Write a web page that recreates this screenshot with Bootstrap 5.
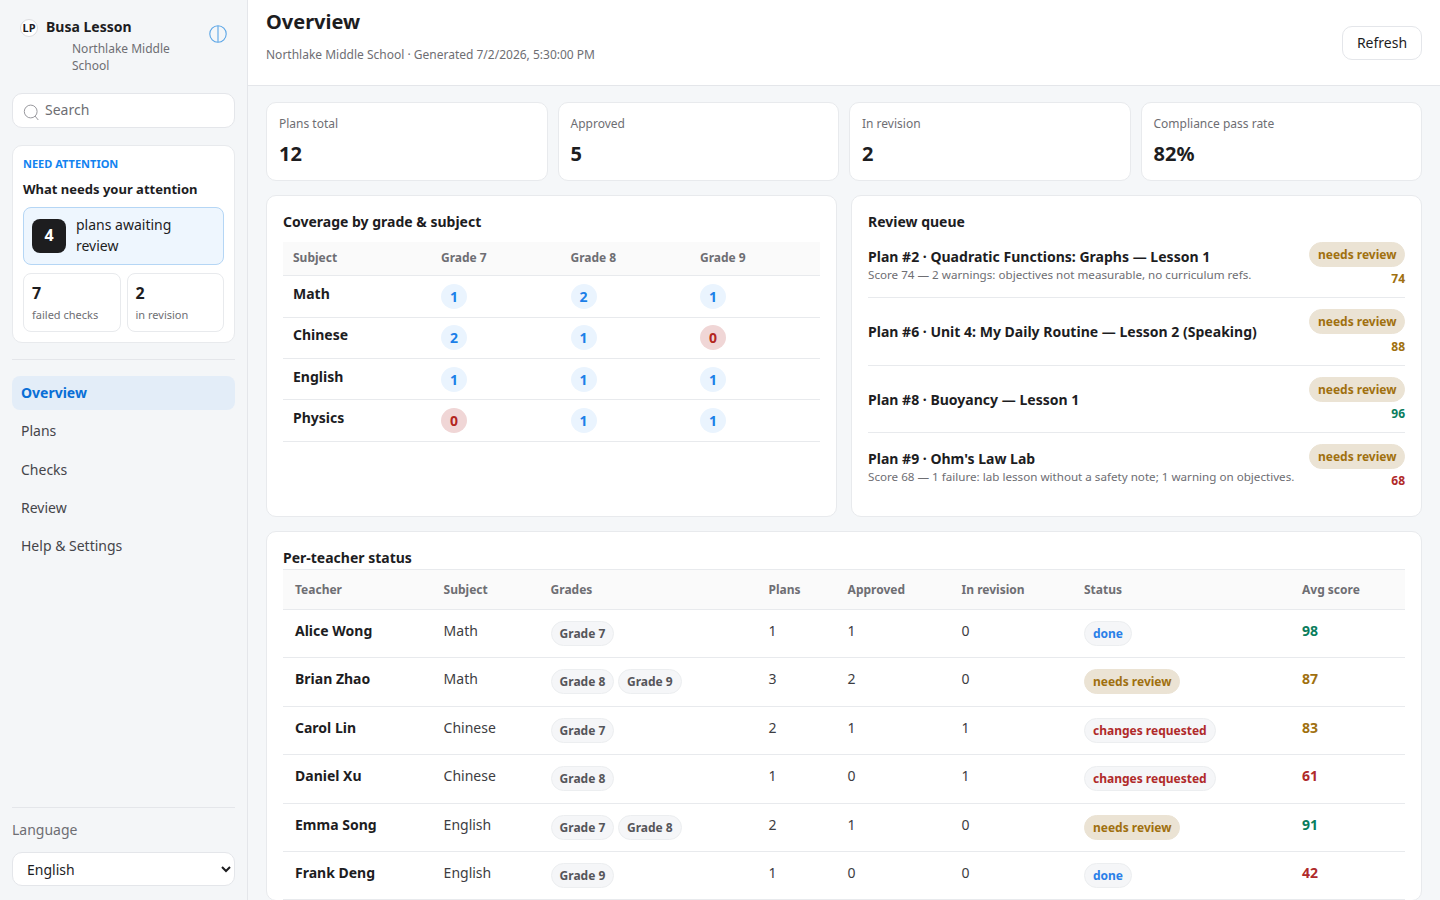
<!DOCTYPE html>
<html lang="en">

<head>
    <meta charset="UTF-8">
    <meta name="viewport" content="width=device-width, initial-scale=1.0">
    <title>Busa Lesson - Overview</title>
    <link href="https://cdn.jsdelivr.net/npm/bootstrap@5.3.0/dist/css/bootstrap.min.css" rel="stylesheet">
    <style>
        body { font-family: "Noto Sans", sans-serif; color: #1d1d1f; background: #f5f7f9; font-size: 14px; height: 100vh; overflow: hidden; }
        .text-soft { color: #6e6e73; }
        .app { height: 100vh; }
        .side { width: 248px; flex: none; background: #f4f6f8; border-right: 1px solid #e4e6ea; padding: 0 12px 14px; }
        .brand { padding: 18px 8px 0; height: 93.4px; flex: none; }
        .brand-logo { width: 18px; height: 18px; border: 1px solid #dcdde0; background: #fff; font-size: 11px; font-weight: 700; margin-right: 8px; margin-top: 1px; }
        .brand-name { font-size: 14px; font-weight: 700; line-height: 18px; }
        .brand-school { font-size: 12px; line-height: 17px; padding-left: 52px; margin-top: 3px; width: 180px; color: #6e6e73; }
        .brand-theme { margin-top: 7px; flex: none; }
        .search { height: 35px; flex: none; background: #fff; border: 1px solid #e4e6ea; border-radius: 10px; margin-bottom: 16.6px; padding: 0 0 2px 10px; gap: 5px; color: #6e6e73; }
        .search svg { margin-top: 5px; }
        .attn { background: #fff; border: 1px solid #e8eaed; border-radius: 10px; padding: 11px 10px 10px; height: 198px; flex: none; }
        .eyebrow { color: #1283f0; font-size: 11px; font-weight: 700; line-height: 14px; }
        .attn-title { font-size: 13px; font-weight: 700; line-height: 18px; margin: 9px 0 9px; }
        .attn-main { height: 58px; background: #eef6fe; border: 1px solid #b5d6f5; border-radius: 8px; padding: 0 8px; gap: 10px; line-height: 21px; }
        .attn-main span:last-child { padding-bottom: 1px; }
        .attn-num { width: 34px; height: 34px; flex: none; background: #1d1d1f; color: #fff; border-radius: 8px; font-size: 16px; font-weight: 700; }
        .attn-minis { gap: 6px; margin-top: 8px; }
        .attn-mini { flex: 1; height: 59px; border: 1px solid #e8eaed; border-radius: 8px; padding: 0 8px; }
        .attn-mini b { display: block; font-size: 16px; line-height: 20px; margin-top: 9px; }
        .attn-mini span { display: block; font-size: 11px; line-height: 14px; margin-top: 5px; color: #6e6e73; }
        .side-rule { border-top: 1px solid #e4e6ea; }
        .side-nav a { display: block; height: 34px; line-height: 34px; padding: 0 9px; margin-bottom: 4.3px; color: #45454a; text-decoration: none; border-radius: 8px; }
        .side-nav a.active { background: #e3edf8; color: #0a6fd6; font-weight: 700; }
        .side-foot { padding-top: 11px; }
        .side-foot label { line-height: 21px; margin-bottom: 12px; }
        .side-select { height: 34px; border: 1px solid #e4e6ea; border-radius: 10px; font-size: 14px; color: #1d1d1f; padding: 0 0 0 10px; appearance: auto; background-image: none; }
        .main { min-width: 0; }
        .page-head { height: 86px; background: #fff; border-bottom: 1px solid #e4e6ea; padding: 0 18px; flex: none; }
        .page-head h1 { font-size: 20px; font-weight: 700; line-height: 26px; margin: 9px 0 12px; }
        .page-head p { font-size: 12px; line-height: 16px; margin: 0; color: #6e6e73; }
        .btn-refresh { height: 34px; width: 80px; font-size: 14px; background: #fff; border: 1px solid #e4e6ea; border-radius: 10px; padding: 0 0 2px; color: #1d1d1f; margin-top: 26px; }
        .content { padding: 16px 18px; }
        .stats { display: grid; grid-template-columns: repeat(4, 1fr); gap: 10px; margin-bottom: 14px; }
        .panel { background: #fff; border: 1px solid #e8eaed; border-radius: 10px; }
        .stat { height: 79px; padding: 13px 12px; }
        .stat small { display: block; font-size: 12px; line-height: 16px; color: #6e6e73; }
        .stat b { display: block; font-size: 20px; line-height: 26px; margin-top: 9px; }
        .pair { display: grid; grid-template-columns: 1fr 1fr; gap: 14px; margin-bottom: 14px; }
        .pair .panel { height: 322px; padding: 16px; }
        .panel-title { font-size: 14px; font-weight: 700; line-height: 20px; margin-bottom: 10px; }
        .tbl { width: 100%; margin: 0; table-layout: fixed; border-collapse: collapse; }
        .tbl th { background: #fafafa; color: #6e6e73; font-size: 12px; font-weight: 700; padding: 0 10px; height: 34px; border-bottom: 1px solid #e8eaed; vertical-align: middle; }
        .tbl td { padding: 0 10px; border-bottom: 1px solid #e8eaed; vertical-align: middle; }
        .cov th { height: 33.3px; }
        .cov td { height: 41.33px; }
        .cov tbody tr:first-child td { height: 42px; }
        .cov td:first-child { font-weight: 700; padding-bottom: 6px; }
        .num { display: inline-flex; width: 26px; height: 25px; border-radius: 50%; align-items: center; justify-content: center; background: #eaf4fe; color: #1c7fe8; font-size: 14px; font-weight: 700; vertical-align: middle; }
        .num.zero { background: #f0d6d6; color: #b3261e; }
        .queue-item { padding: 11px 0; border-bottom: 1px solid #e8eaed; gap: 8px; }
        .panel-title + .queue-item { padding-top: 0; }
        .queue-item:last-child { border-bottom: 0; }
        .queue-main { padding-top: 1.6px; }
        .queue-title { font-size: 14.04px; font-weight: 700; line-height: 18px; }
        .queue-note { font-size: 11.63px; line-height: 15px; margin-top: 1px; color: #6e6e73; }
        .queue-side { gap: 4.33px; }
        .queue-side .score { margin-bottom: -1px; }
        .tag { display: inline-block; height: 25px; line-height: 23px; padding: 0 8px; border-radius: 13px; font-size: 12px; font-weight: 700; border: 1px solid #eceef0; background: #f5f6f8; color: #55555a; white-space: nowrap; }
        .tag.amber { background: #ebe3d4; border-color: #ebe3d4; color: #a0700f; padding: 0 7.5px 0 8px; }
        .tag.blue { color: #2a80e8; }
        .tag.red { color: #b02a2a; }
        .score { font-size: 12px; font-weight: 700; line-height: 16px; }
        .s-g { color: #0a7d5d; }
        .s-a { color: #a0700f; }
        .s-r { color: #b02a2a; }
        .teachers { padding: 16px 16px 0; }
        .teachers .panel-title { margin-bottom: 1px; }
        .teach th { height: 40px; border-top: 1px solid #e8eaed; padding: 0 12px; }
        .teach td { height: 48.4px; padding: 0 12px 0.4px; }
        .teach td.name { font-weight: 700; padding-bottom: 6.3px; }
        .teach td.plain { padding-bottom: 6.3px; color: #3d3d42; }
        .teach td.score { font-size: 14px; line-height: 21px; padding-bottom: 6.3px; }
    </style>
</head>

<body>
    <div class="app d-flex">
        <aside class="side d-flex flex-column">
            <div class="brand d-flex">
                <div class="flex-grow-1">
                    <div class="d-flex">
                        <span class="brand-logo rounded-circle d-flex align-items-center justify-content-center">LP</span>
                        <span class="brand-name">Busa Lesson</span>
                    </div>
                    <div class="brand-school">Northlake Middle School</div>
                </div>
                <svg class="brand-theme" width="18" height="18" viewBox="0 0 18 18" fill="none" stroke="#5aa5e6" stroke-width="1.1"><circle cx="9" cy="9" r="8.2"/><path d="M9 1v16"/></svg>
            </div>
            <div class="search d-flex align-items-center">
                <svg width="17" height="17" viewBox="0 0 17 17" fill="none" stroke="#9a9a9f" stroke-width="1"><circle cx="7.7" cy="7.5" r="6.4"/><path d="M12 12l3.3 4"/></svg>
                <span>Search</span>
            </div>
            <div class="attn">
                <div class="eyebrow">NEED ATTENTION</div>
                <div class="attn-title">What needs your attention</div>
                <div class="attn-main d-flex align-items-center">
                    <span class="attn-num d-flex align-items-center justify-content-center">4</span>
                    <span>plans awaiting review</span>
                </div>
                <div class="d-flex attn-minis">
                    <div class="attn-mini"><b>7</b><span>failed checks</span></div>
                    <div class="attn-mini"><b>2</b><span>in revision</span></div>
                </div>
            </div>
            <div class="side-rule my-3"></div>
            <nav class="side-nav">
                <a class="active" href="#">Overview</a>
                <a href="#">Plans</a>
                <a href="#">Checks</a>
                <a href="#">Review</a>
                <a href="#">Help &amp; Settings</a>
            </nav>
            <div class="mt-auto side-rule side-foot">
                <label class="text-soft d-block" for="lang">Language</label>
                <select id="lang" class="form-select side-select"><option>English</option></select>
            </div>
        </aside>

        <main class="main flex-grow-1 d-flex flex-column">
            <header class="page-head d-flex justify-content-between">
                <div>
                    <h1>Overview</h1>
                    <p>Northlake Middle School · Generated 7/2/2026, 5:30:00 PM</p>
                </div>
                <button class="btn btn-refresh">Refresh</button>
            </header>
            <div class="content">
                <div class="stats">
                    <div class="panel stat"><small>Plans total</small><b>12</b></div>
                    <div class="panel stat"><small>Approved</small><b>5</b></div>
                    <div class="panel stat"><small>In revision</small><b>2</b></div>
                    <div class="panel stat"><small>Compliance pass rate</small><b>82%</b></div>
                </div>
                <div class="pair">
                    <section class="panel">
                        <div class="panel-title">Coverage by grade &amp; subject</div>
                        <table class="tbl cov">
                            <colgroup><col style="width:148px"><col style="width:129.5px"><col style="width:129.5px"><col></colgroup>
                            <thead><tr><th>Subject</th><th>Grade 7</th><th>Grade 8</th><th>Grade 9</th></tr></thead>
                            <tbody>
                                <tr><td>Math</td><td><span class="num">1</span></td><td><span class="num">2</span></td><td><span class="num">1</span></td></tr>
                                <tr><td>Chinese</td><td><span class="num">2</span></td><td><span class="num">1</span></td><td><span class="num zero">0</span></td></tr>
                                <tr><td>English</td><td><span class="num">1</span></td><td><span class="num">1</span></td><td><span class="num">1</span></td></tr>
                                <tr><td>Physics</td><td><span class="num zero">0</span></td><td><span class="num">1</span></td><td><span class="num">1</span></td></tr>
                            </tbody>
                        </table>
                    </section>
                    <section class="panel">
                        <div class="panel-title">Review queue</div>
                        <div class="queue-item d-flex justify-content-between align-items-center">
                            <div class="queue-main">
                                <div class="queue-title">Plan #2 · Quadratic Functions: Graphs — Lesson 1</div>
                                <div class="queue-note">Score 74 — 2 warnings: objectives not measurable, no curriculum refs.</div>
                            </div>
                            <div class="queue-side d-flex flex-column align-items-end"><span class="tag amber">needs review</span><div class="score s-a">74</div></div>
                        </div>
                        <div class="queue-item d-flex justify-content-between align-items-center">
                            <div class="queue-main"><div class="queue-title">Plan #6 · Unit 4: My Daily Routine — Lesson 2 (Speaking)</div></div>
                            <div class="queue-side d-flex flex-column align-items-end"><span class="tag amber">needs review</span><div class="score s-a">88</div></div>
                        </div>
                        <div class="queue-item d-flex justify-content-between align-items-center">
                            <div class="queue-main"><div class="queue-title">Plan #8 · Buoyancy — Lesson 1</div></div>
                            <div class="queue-side d-flex flex-column align-items-end"><span class="tag amber">needs review</span><div class="score s-g">96</div></div>
                        </div>
                        <div class="queue-item d-flex justify-content-between align-items-center">
                            <div class="queue-main">
                                <div class="queue-title">Plan #9 · Ohm's Law Lab</div>
                                <div class="queue-note">Score 68 — 1 failure: lab lesson without a safety note; 1 warning on objectives.</div>
                            </div>
                            <div class="queue-side d-flex flex-column align-items-end"><span class="tag amber">needs review</span><div class="score s-r">68</div></div>
                        </div>
                    </section>
                </div>
                <section class="panel teachers">
                    <div class="panel-title">Per-teacher status</div>
                    <table class="tbl teach">
                        <colgroup><col style="width:148.6px"><col style="width:107px"><col style="width:218px"><col style="width:79px"><col style="width:114px"><col style="width:122.4px"><col style="width:218px"><col></colgroup>
                        <thead><tr><th>Teacher</th><th>Subject</th><th>Grades</th><th>Plans</th><th>Approved</th><th>In revision</th><th>Status</th><th>Avg score</th></tr></thead>
                        <tbody>
                            <tr><td class="name">Alice Wong</td><td class="plain">Math</td><td><span class="tag">Grade 7</span></td><td class="plain">1</td><td class="plain">1</td><td class="plain">0</td><td><span class="tag blue">done</span></td><td class="score s-g">98</td></tr>
                            <tr><td class="name">Brian Zhao</td><td class="plain">Math</td><td><span class="tag">Grade 8</span> <span class="tag">Grade 9</span></td><td class="plain">3</td><td class="plain">2</td><td class="plain">0</td><td><span class="tag amber">needs review</span></td><td class="score s-a">87</td></tr>
                            <tr><td class="name">Carol Lin</td><td class="plain">Chinese</td><td><span class="tag">Grade 7</span></td><td class="plain">2</td><td class="plain">1</td><td class="plain">1</td><td><span class="tag red">changes requested</span></td><td class="score s-a">83</td></tr>
                            <tr><td class="name">Daniel Xu</td><td class="plain">Chinese</td><td><span class="tag">Grade 8</span></td><td class="plain">1</td><td class="plain">0</td><td class="plain">1</td><td><span class="tag red">changes requested</span></td><td class="score s-r">61</td></tr>
                            <tr><td class="name">Emma Song</td><td class="plain">English</td><td><span class="tag">Grade 7</span> <span class="tag">Grade 8</span></td><td class="plain">2</td><td class="plain">1</td><td class="plain">0</td><td><span class="tag amber">needs review</span></td><td class="score s-g">91</td></tr>
                            <tr><td class="name">Frank Deng</td><td class="plain">English</td><td><span class="tag">Grade 9</span></td><td class="plain">1</td><td class="plain">0</td><td class="plain">0</td><td><span class="tag blue">done</span></td><td class="score s-r">42</td></tr>
                        </tbody>
                    </table>
                </section>
            </div>
        </main>
    </div>
    <script src="https://cdn.jsdelivr.net/npm/bootstrap@5.3.0/dist/js/bootstrap.bundle.min.js"></script>
</body>

</html>
